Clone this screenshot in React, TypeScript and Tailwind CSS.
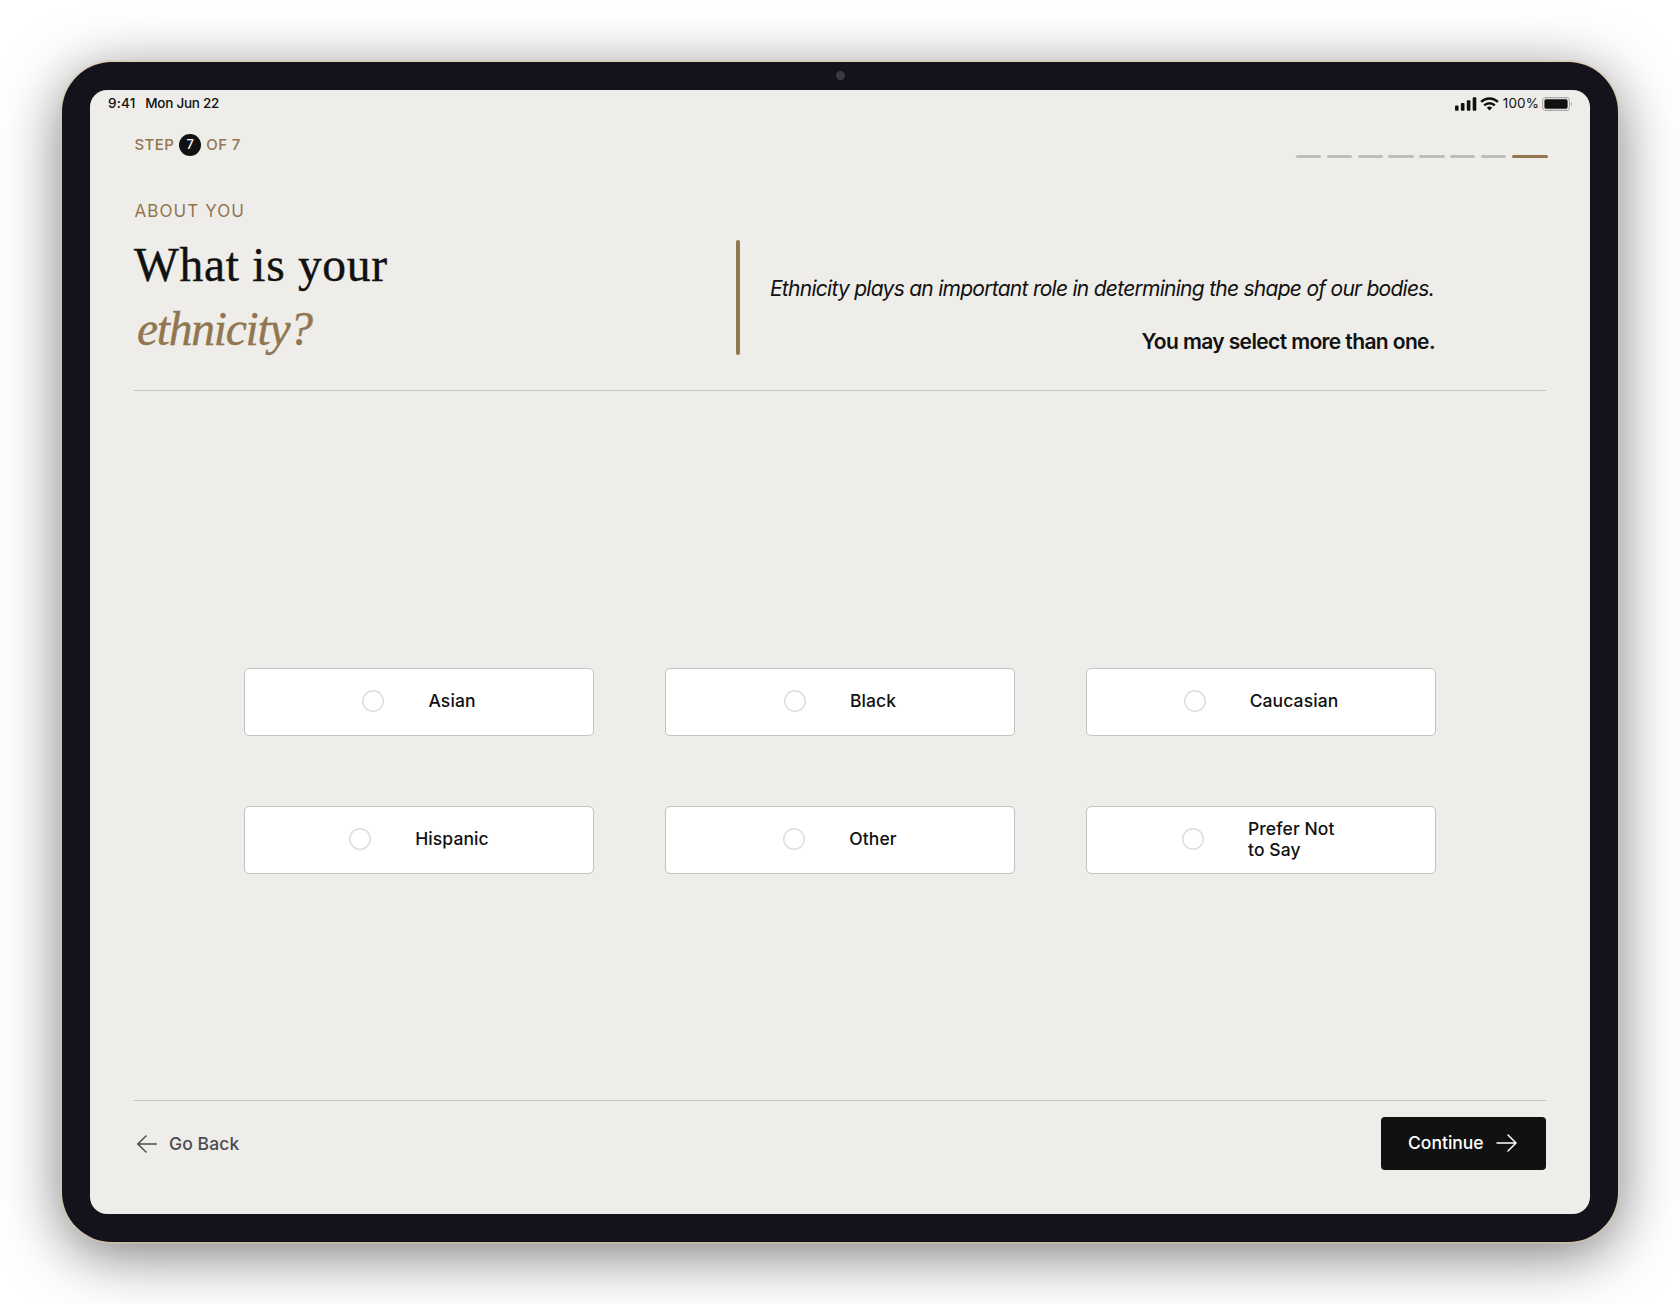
import { useState } from 'react';

const OPTIONS = ['Asian', 'Black', 'Caucasian', 'Hispanic', 'Other', 'Prefer Not to Say'];
const STEPS = 8;

function StatusBar() {
  return (
    <div className="flex h-[26px] items-center justify-between pl-[18px] pr-[17px] pt-[2px] text-[13.5px] font-medium leading-none">
      <div className="flex gap-[9.5px]">
        <span className="tracking-[0.25px]">9:41</span>
        <span className="tracking-[-0.25px]">Mon Jun 22</span>
      </div>
      <div className="flex items-center">
        <svg className="-mt-px" width="22" height="14" viewBox="0 0 22 14" fill="#111">
          <rect x="0" y="8.5" width="3.6" height="5.2" rx="1" />
          <rect x="5.9" y="6" width="3.6" height="7.7" rx="1" />
          <rect x="11.8" y="3.2" width="3.6" height="10.5" rx="1" />
          <rect x="17.7" y="0.3" width="3.6" height="13.4" rx="1" />
        </svg>
        <svg className="-mt-px ml-[3px]" width="19" height="14" viewBox="0 0 19 14" fill="none" stroke="#111" strokeWidth="2.5">
          <path d="M1.1 4.9a12 12 0 0 1 16.8 0" />
          <path d="M4.2 8.3a7.6 7.6 0 0 1 10.6 0" />
          <path d="M9.5 13.4 6.8 10.7a3.9 3.9 0 0 1 5.4 0z" fill="#111" stroke="none" />
        </svg>
        <span className="ml-[4px] font-normal tracking-[0.1px]">100%</span>
        <svg className="-mt-px ml-[3px]" width="31" height="14" viewBox="0 0 31 14">
          <rect x="0.6" y="0.6" width="26.8" height="12.8" rx="3.4" fill="none" stroke="#a9a8a6" strokeWidth="1.1" />
          <rect x="2.4" y="2.3" width="23.2" height="9.4" rx="1.6" fill="#111" />
          <path d="M28.9 4.9v4.2c1.6-.8 1.6-3.4 0-4.2z" fill="#a9a8a6" />
        </svg>
      </div>
    </div>
  );
}

function Option({ label, checked, onToggle }: { label: string; checked: boolean; onToggle: () => void }) {
  return (
    <button
      onClick={onToggle}
      className="flex h-[68px] items-center justify-center gap-[44px] rounded-[5px] border border-[#c2c2c2] bg-white pb-[2px] text-left text-[17.5px] font-medium leading-[21px] tracking-[0.1px]"
    >
      <span className={`size-[22px] shrink-0 rounded-full ${checked ? 'bg-[#917650]' : 'shadow-[inset_0_0_0_1.5px_#dedede]'}`} />
      <span className="-mt-px max-w-[92px]">{label}</span>
    </button>
  );
}

export default function App() {
  const [selected, setSelected] = useState<string[]>([]);

  function toggle(label: string) {
    setSelected(s => (s.includes(label) ? s.filter(x => x !== label) : [...s, label]));
  }

  return (
    <div className="h-[1304px] w-[1680px] overflow-hidden bg-white p-[62px] font-['Inter',sans-serif] text-[#111]">
      {/* Tablet body */}
      <div className="relative h-[1180px] w-[1556px] rounded-[50px] bg-[#14121b] p-[28px] shadow-[0_0_0_2px_rgba(220,200,165,0.5),0_12px_60px_rgba(0,0,0,0.53)]">
        <span className="absolute left-[774px] top-[9px] size-[9px] rounded-full bg-[#3b3945]" />

        <div className="flex h-[1124px] flex-col overflow-hidden rounded-[17px] bg-[#eeede9]">
          <StatusBar />

          <div className="flex flex-1 flex-col px-[44px]">
            <header className="flex justify-between pt-[17px]">
              <div className="flex h-[24px] items-center pl-[0.5px] text-[15px] font-medium tracking-[0.4px] text-[#917650]">
                STEP
                <span className="mx-[5px] flex size-[22px] items-center justify-center rounded-full bg-[#111] text-[13px] tracking-normal text-white">7</span>
                OF 7
              </div>
              <div className="-mr-[2px] mt-[22px] flex gap-[5.3px]">
                {Array.from({ length: STEPS }, (_, i) => (
                  <span key={i} className={`h-[3px] rounded-full ${i === STEPS - 1 ? 'w-[36.5px] bg-[#917650]' : 'w-[25.5px] bg-[#bebebd]'}`} />
                ))}
              </div>
            </header>

            <p className="mt-[41px] pl-[0.5px] text-[17px] leading-[24px] tracking-[1.08px] text-[#917650]">ABOUT YOU</p>

            <div className="flex h-[168px] border-b border-[#c2c2c1]">
              <h1 className="w-[602px] pt-[10px] font-['Liberation_Serif',serif] text-[47.5px] leading-[64px] tracking-[0.7px] [-webkit-text-stroke:0.4px]">
                What is your
                <em className="block pl-[3px] tracking-[-1.25px] text-[#917650]">ethnicity?</em>
              </h1>
              <div className="mt-[17px] h-[115px] w-[4px] rounded-full bg-[#917650]" />
              <div className="flex flex-1 flex-col items-end pr-[111px] pt-[51px] text-[21px] leading-[30px]">
                <p className="whitespace-nowrap pr-px italic tracking-[-0.73px]">Ethnicity plays an important role in determining the shape of our bodies.</p>
                <p className="mt-[23px] font-semibold tracking-[-0.62px]">You may select more than one.</p>
              </div>
            </div>

            <div className="mt-[277px] grid grid-cols-3 gap-x-[71px] gap-y-[70px] px-[110px]">
              {OPTIONS.map(label => (
                <Option key={label} label={label} checked={selected.includes(label)} onToggle={() => toggle(label)} />
              ))}
            </div>

            <footer className="mt-auto flex h-[114px] items-start justify-between border-t border-[#c2c2c3] pt-[16px] text-[17.5px] font-medium">
              <button className="flex h-[55px] items-center gap-[11px] pl-[3px] tracking-[0.1px] text-[#4b4b52]">
                <svg className="-mt-px" width="21" height="18" viewBox="0 0 21 18" fill="none" stroke="currentColor" strokeWidth="1.5" strokeLinecap="round" strokeLinejoin="round">
                  <path d="M19.3 9H.8M9 1 .8 9 9 17" />
                </svg>
                Go Back
              </button>
              <button className="flex h-[53px] w-[165px] items-center gap-[12px] rounded-[4px] bg-[#111] pl-[27px] text-white">
                Continue
                <svg className="-mt-[2px]" width="21" height="18" viewBox="0 0 21 18" fill="none" stroke="currentColor" strokeWidth="1.5" strokeLinecap="round" strokeLinejoin="round">
                  <path d="M1 9h19M12 1l8 8-8 8" />
                </svg>
              </button>
            </footer>
          </div>
        </div>
      </div>
    </div>
  );
}
